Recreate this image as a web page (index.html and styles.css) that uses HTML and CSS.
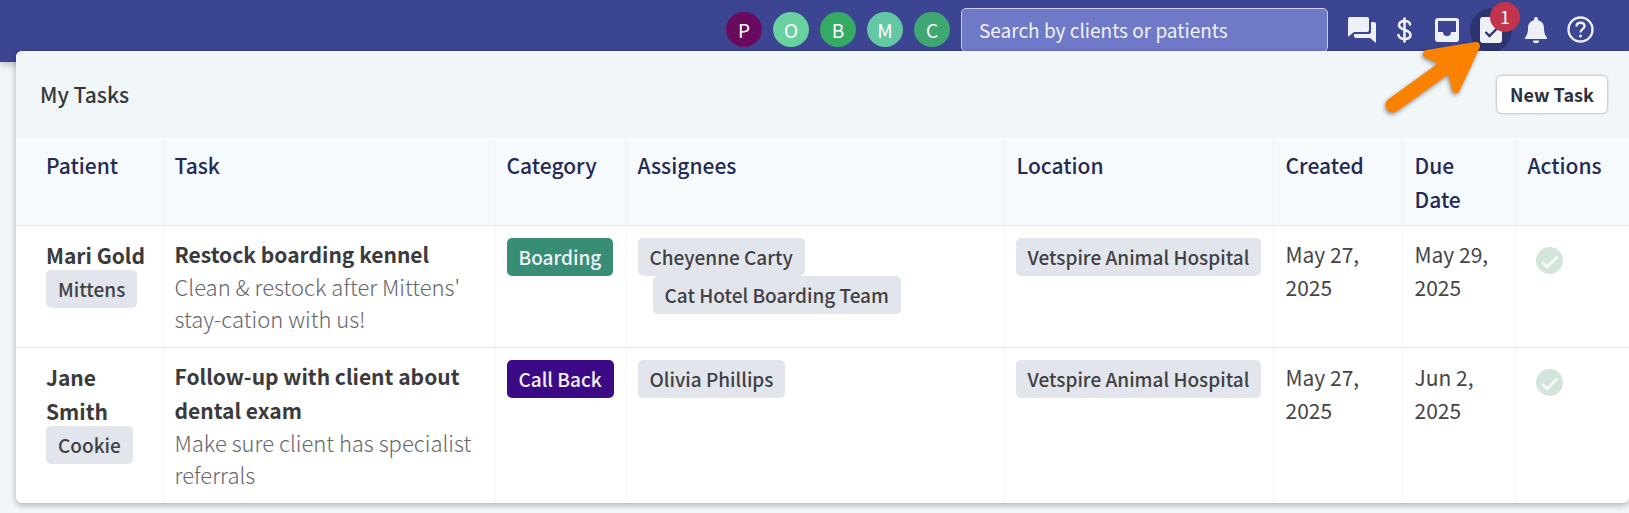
FILE: index.html
```html
<!DOCTYPE html>
<html lang="en">
  <head>
    <meta charset="UTF-8" />
    <meta name="viewport" content="width=device-width, initial-scale=1.0" />
    <title>My Tasks</title>
    <link rel="stylesheet" href="styles.css">
  </head>
  <body>
    <div class="navbar">
      <div class="avatars">
        <span class="avatar av-p">P</span>
        <span class="avatar av-o">O</span>
        <span class="avatar av-b">B</span>
        <span class="avatar av-m">M</span>
        <span class="avatar av-c">C</span>
      </div>
      <div class="search">Search by clients or patients</div>
      <div class="nav-icons">
        <svg class="icon-chat" width="28" height="26" viewBox="0 0 28 26"><path fill="#eef0f8" d="M2 0h17a2 2 0 0 1 2 2v11a2 2 0 0 1-2 2H6l-6 5V2a2 2 0 0 1 2-2z"/><path fill="#eef0f8" d="M23 5h3a2 2 0 0 1 2 2v19l-6-5H8a2 2 0 0 1-2-2v-2h15a2 2 0 0 0 2-2z"/></svg>
        <svg class="icon-dollar" width="15" height="26" viewBox="0 0 15 26"><path fill="none" stroke="#eef0f8" stroke-width="2.6" stroke-linecap="round" d="M13 7.500C13 5 10.500 4 7.500 4S2 5.500 2 8s2.500 3.700 5.500 4.700S13.500 15 13.500 18 10.500 22 7.500 22 1.500 20.500 1.500 18"/><path stroke="#eef0f8" stroke-width="2.6" stroke-linecap="round" d="M7.500 1.500v23"/></svg>
        <svg class="icon-inbox" width="24" height="24" viewBox="0 0 24 24"><path fill="#eef0f8" d="M3 0h18a3 3 0 0 1 3 3v18a3 3 0 0 1-3 3H3a3 3 0 0 1-3-3V3a3 3 0 0 1 3-3zm0 3v11h5a4 4 0 0 0 8 0h5V3z"/></svg>
        <div class="task-btn">
          <svg width="22" height="26" viewBox="0 0 22 26"><rect width="22" height="26" rx="3" fill="#eef0f8"/><path fill="none" stroke="#2b3470" stroke-width="2.400" d="M5.500 15l4 4 8-8"/></svg>
          <span class="badge">1</span>
        </div>
        <svg class="icon-bell" width="22" height="26" viewBox="0 0 22 26"><path fill="#eef0f8" d="M11 0a2 2 0 0 1 2 2v1.200c3.700.8 6 4 6 7.800 0 6 1.500 7.800 3 9.500V22H0v-1.500C1.500 18.800 3 17 3 11c0-3.800 2.300-7 6-7.800V2a2 2 0 0 1 2-2zM8 23.500h6a3 3 0 0 1-6 0z"/></svg>
        <svg class="icon-help" width="27" height="27" viewBox="0 0 27 27"><circle cx="13.500" cy="13.500" r="12" fill="none" stroke="#eef0f8" stroke-width="2.400"/><path fill="none" stroke="#eef0f8" stroke-width="2.400" d="M9.500 10.500c0-2.500 1.800-3.800 4-3.800s4 1.300 4 3.500c0 3-4 3-4 6.300"/><circle cx="13.500" cy="20" r="1.500" fill="#eef0f8"/></svg>
      </div>
    </div>

    <div class="panel">
      <div class="panel-head">
        <h3>My Tasks</h3>
        <button class="new-task">New Task</button>
      </div>
      <table class="tasks">
        <colgroup>
          <col class="c-patient"><col class="c-task"><col class="c-cat"><col class="c-assign"><col class="c-loc"><col class="c-created"><col class="c-due"><col class="c-actions">
        </colgroup>
        <thead>
          <tr>
            <th>Patient</th><th>Task</th><th>Category</th><th>Assignees</th><th>Location</th><th>Created</th><th>Due<br>Date</th><th>Actions</th>
          </tr>
        </thead>
        <tbody>
          <tr class="row-one">
            <td>
              <div class="name">Mari Gold</div>
              <span class="tag pet">Mittens</span>
            </td>
            <td>
              <div class="title">Restock boarding kennel</div>
              <div class="desc">Clean &amp; restock after Mittens'<br>stay-cation with us!</div>
            </td>
            <td><span class="cat cat-green">Boarding</span></td>
            <td>
              <span class="tag">Cheyenne Carty</span>
              <span class="tag tag-next">Cat Hotel Boarding Team</span>
            </td>
            <td><span class="tag">Vetspire Animal Hospital</span></td>
            <td class="date">May 27, 2025</td>
            <td class="date">May 29, 2025</td>
            <td><svg class="done" width="27" height="27" viewBox="0 0 27 27"><circle cx="13.500" cy="13.500" r="13.500" fill="#d3e5da"/><path fill="none" stroke="#f5f9f6" stroke-width="3" d="M6 15l5 5 10.500-10.500"/></svg></td>
          </tr>
          <tr class="row-two">
            <td>
              <div class="name">Jane Smith</div>
              <span class="tag pet">Cookie</span>
            </td>
            <td>
              <div class="title">Follow-up with client about dental exam</div>
              <div class="desc">Make sure client has specialist<br>referrals</div>
            </td>
            <td><span class="cat cat-purple">Call Back</span></td>
            <td><span class="tag">Olivia Phillips</span></td>
            <td><span class="tag">Vetspire Animal Hospital</span></td>
            <td class="date">May 27, 2025</td>
            <td class="date">Jun 2, 2025</td>
            <td><svg class="done" width="27" height="27" viewBox="0 0 27 27"><circle cx="13.500" cy="13.500" r="13.500" fill="#d3e5da"/><path fill="none" stroke="#f5f9f6" stroke-width="3" d="M6 15l5 5 10.500-10.500"/></svg></td>
          </tr>
        </tbody>
      </table>
    </div>

    <!-- arrow pointing at the tasks icon -->
    <svg class="arrow" width="110" height="80" viewBox="0 0 110 80">
      <path fill="none" stroke="#fb8200" stroke-width="15" stroke-linecap="round" d="M13 65L70 24"/>
      <path fill="#fb8200" stroke="#fb8200" stroke-width="8" stroke-linejoin="round" d="M47 14L96 6L76 49L70 25Z"/>
    </svg>
  </body>
</html>
```

FILE: styles.css
```css
* {
  margin: 0;
  padding: 0;
  box-sizing: border-box;
}
body {
  background-color: #f1f6f9;
  font-family: "Noto Sans CJK SC", "Source Sans Pro", "Noto Sans", sans-serif;
  color: #3d3d3f;
  overflow: hidden;
  height: 513px;
}

/* top bar */
.navbar {
  height: 62px;
  background-color: #3b4592;
  display: flex;
  align-items: flex-start;
  justify-content: flex-end;
  padding-top: 8px;
  padding-right: 35px;
  box-shadow: 0 2px 8px rgba(0, 0, 0, 0.25);
}
.avatars {
  display: flex;
  gap: 11px;
  margin-top: 4px;
  margin-right: 11px;
}
.avatar {
  width: 36px;
  height: 35px;
  border-radius: 50%;
  color: white;
  font-size: 19px;
  line-height: 35px;
  text-align: center;
}
.av-p { background-color: #6a0a5f; }
.av-o { background-color: #69d09f; }
.av-b { background-color: #35aa64; }
.av-m { background-color: #63c8a3; }
.av-c { background-color: #3fa872; }

.search {
  width: 367px;
  height: 44px;
  background-color: #6f79c7;
  border: 1px solid #c8cdea;
  border-radius: 5px;
  color: #f1f2fa;
  font-size: 19px;
  line-height: 41px;
  padding-left: 17px;
}
.nav-icons {
  display: flex;
  align-items: center;
  height: 43px;
  margin-left: 20px;
}
.icon-dollar { margin-left: 21px; }
.icon-inbox { margin-left: 23px; }
.icon-bell { margin-left: 23px; }
.icon-help { margin-left: 20px; }
.task-btn {
  position: relative;
  margin-left: 21px;
  width: 22px;
  height: 26px;
}
.task-btn::before {
  content: "";
  position: absolute;
  left: -10px;
  top: -9px;
  width: 42px;
  height: 44px;
  border-radius: 50%;
  background-color: #2b3470;
}
.task-btn svg {
  position: relative;
  display: block;
}
.badge {
  position: absolute;
  left: 10px;
  top: -15px;
  width: 30px;
  height: 30px;
  border-radius: 50%;
  background-color: #c1344c;
  color: white;
  font-size: 18px;
  line-height: 29px;
  text-align: center;
}

/* panel */
.panel {
  position: relative;
  margin-top: -11px;
  margin-left: 16px;
  background-color: white;
  border-radius: 6px 0 6px 6px;
  box-shadow: 0 2px 6px rgba(0, 0, 0, 0.3);
  overflow: hidden;
}
.panel-head {
  height: 86px;
  background-color: #f1f6f9;
  display: flex;
  align-items: center;
  justify-content: space-between;
  padding: 0 22px 0 24px;
}
.panel-head h3 {
  font-size: 21px;
  font-weight: 500;
  color: #38383a;
}
.new-task {
  width: 110px;
  height: 37px;
  background-color: white;
  border: none;
  border-radius: 5px;
  box-shadow: 0 0 3px rgba(0, 0, 0, 0.4);
  font-family: inherit;
  font-size: 18px;
  font-weight: 700;
  color: #2c3142;
}

/* table */
.tasks {
  width: 1613px;
  border-collapse: collapse;
  table-layout: fixed;
}
.c-patient { width: 147px; }
.c-task { width: 332px; }
.c-cat { width: 131px; }
.c-assign { width: 378px; }
.c-loc { width: 269px; }
.c-created { width: 129px; }
.c-due { width: 113px; }
.c-actions { width: 114px; }
.tasks th {
  height: 88px;
  background-color: #f6fafd;
  color: #252a55;
  font-size: 21px;
  font-weight: 500;
  line-height: 33.600px;
  text-align: left;
  vertical-align: top;
  padding: 12px 12px 0;
  border-bottom: 1px solid #e2e8ef;
  border-left: 1px solid #f1f4f8;
}
.tasks td {
  font-size: 21px;
  line-height: 33.600px;
  vertical-align: top;
  padding: 12px 12px 0;
  border-left: 1px solid #f5f6f9;
}
.tasks th:first-child, .tasks td:first-child {
  border-left: none;
  padding-left: 30px;
  padding-right: 10px;
}
.tasks th:nth-child(2), .tasks td:nth-child(2),
.tasks th:nth-child(3), .tasks td:nth-child(3),
.tasks th:nth-child(4), .tasks td:nth-child(4),
.tasks td:nth-child(5) {
  padding-left: 11px;
}
.row-one td {
  height: 122px;
  border-bottom: 1px solid #e2e8ef;
}
.row-two td {
  height: 156px;
}
.row-two .date {
  padding-top: 13px;
}
.tasks .name, .tasks .title {
  font-weight: 700;
  color: #3a3a3c;
  line-height: 34px;
}
.title {
  margin-top: -0.400px;
}
.desc {
  color: #66666a;
  font-size: 22px;
  line-height: 32px;
  font-weight: 300;
  margin-top: -1.100px;
}
.tag {
  display: inline-block;
  height: 38px;
  padding: 0 12px;
  background-color: #e2e6ec;
  border-radius: 5px;
  color: #3f3f44;
  font-size: 19px;
  font-weight: 500;
  line-height: 38px;
  white-space: nowrap;
}
.pet {
  display: block;
  width: fit-content;
  margin-top: -2px;
}
.tag-next {
  display: block;
  width: fit-content;
  margin-left: 15px;
}
.cat {
  display: inline-block;
  height: 38px;
  padding: 0 12px;
  border-radius: 5px;
  color: #f2f2f6;
  font-size: 19px;
  font-weight: 500;
  line-height: 38px;
  white-space: nowrap;
}
.cat-green { background-color: #388e74; }
.cat-purple { background-color: #3c0a85; }
.date {
  color: #444446;
}
.done {
  display: block;
  margin: 9px 0 0 8px;
}

.arrow {
  position: absolute;
  left: 1380px;
  top: 40px;
  filter: drop-shadow(-1px 2px 2px rgba(0, 0, 0, 0.4));
}
```
